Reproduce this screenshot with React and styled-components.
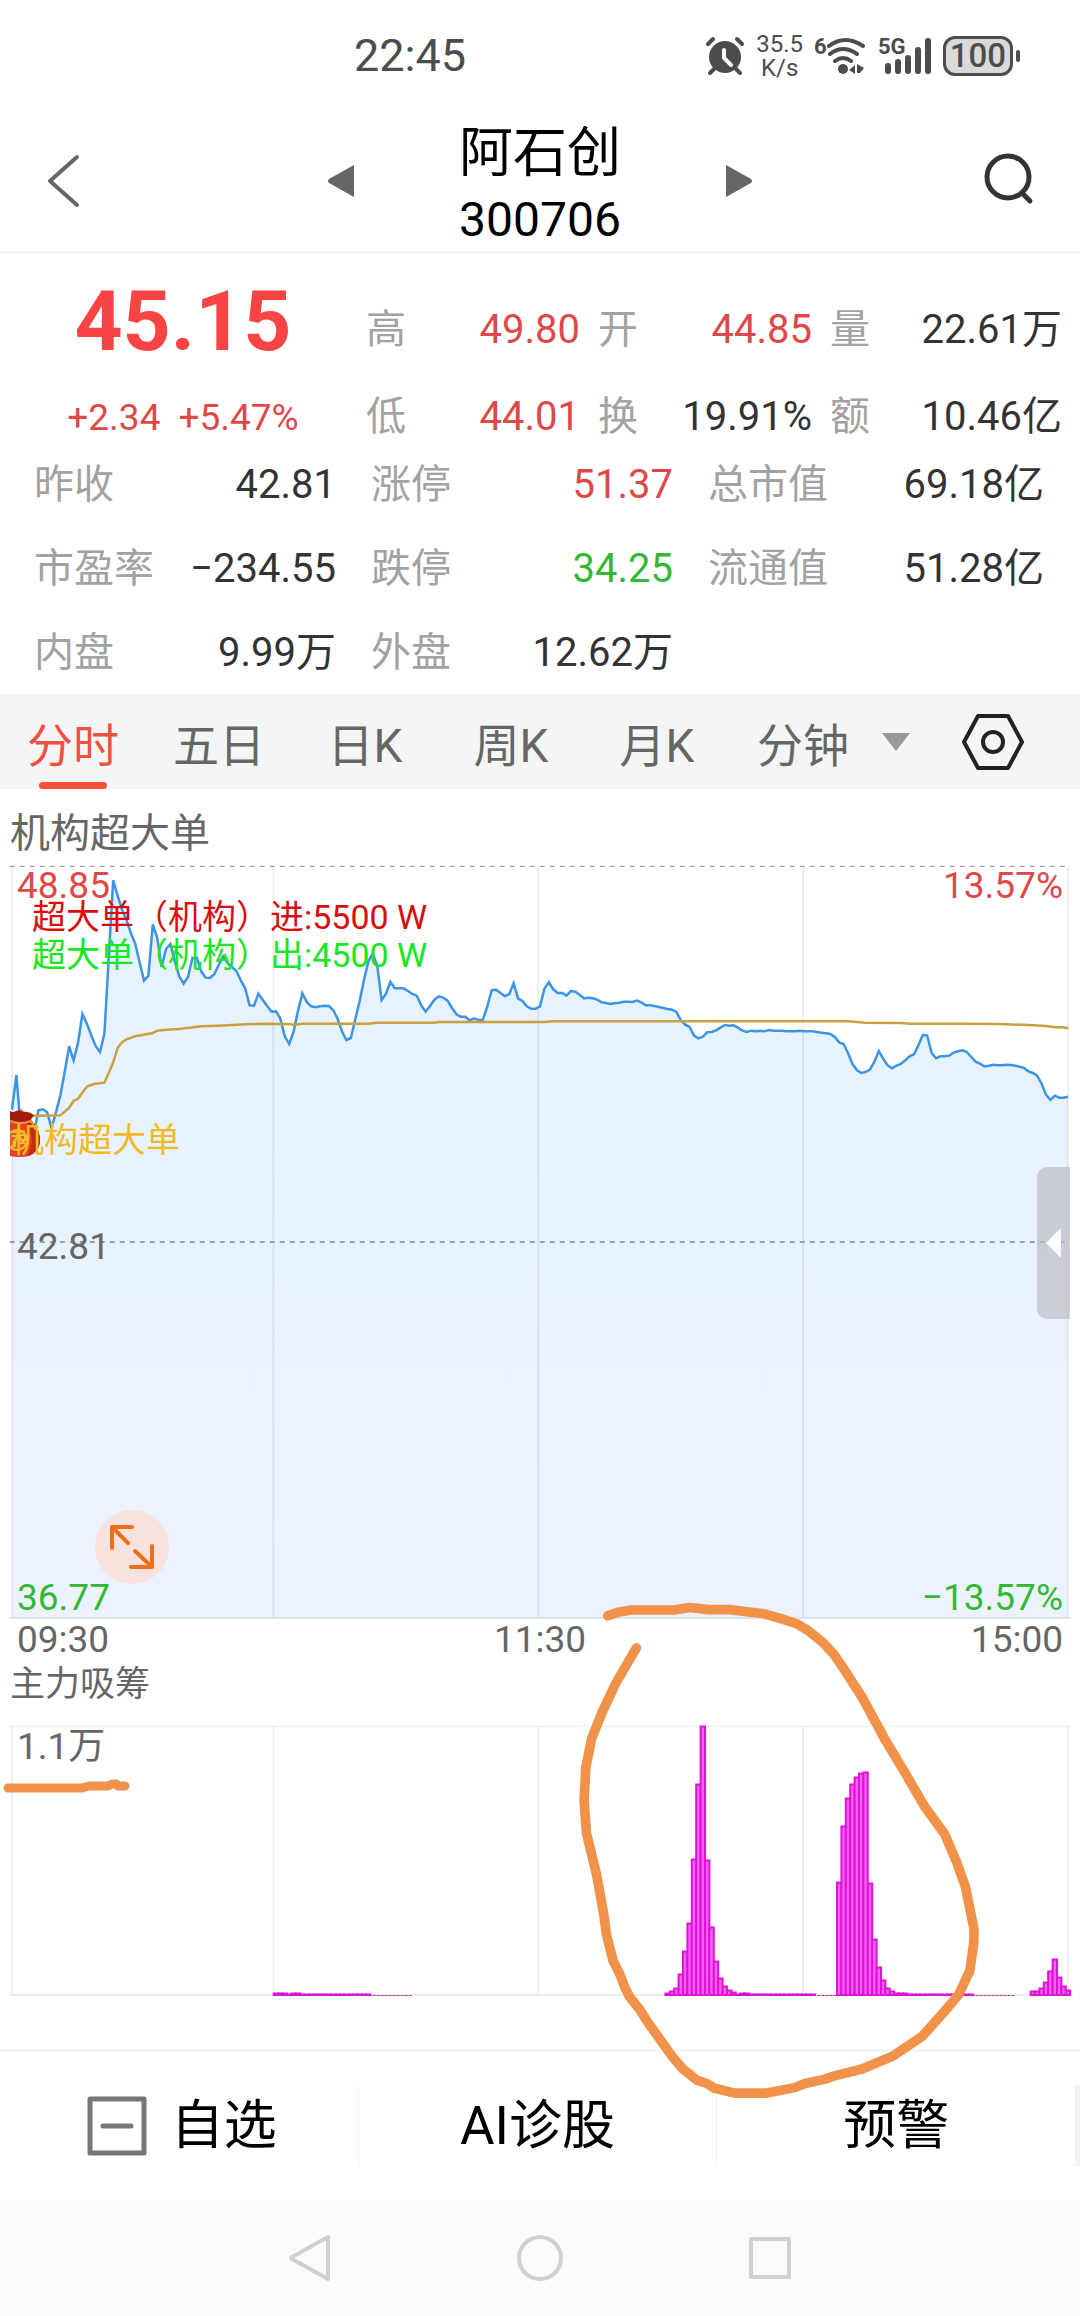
import React from "react";
import styled, { createGlobalStyle } from "styled-components";

const GlobalStyle = createGlobalStyle`
  * { box-sizing: border-box; }
  body {
    margin: 0;
    background: #fff;
    font-family: Roboto, "Noto Sans CJK SC", sans-serif;
  }
  button {
    margin: 0;
    padding: 0;
    border: 0;
    background: none;
    font: inherit;
    color: inherit;
    cursor: pointer;
  }
  svg { display: block; }
`;

const RED = "#e04848";
const GREEN = "#34b834";
const DARK = "#333";

const toneColor = { up: RED, down: GREEN, plain: DARK };

/* ---------- data ---------- */

// Minute prices, measured downwards on a scale that runs from 49 (48.85) to 2305 (36.77).
const SCALE_TOP = 49;
const SCALE_SPAN = 2256;
const MINUTES = 240;

const PRICES = [
  780, 676, 840, 870, 865, 850, 782, 779, 788, 835, 787, 737, 665, 590, 632, 580, 493, 522, 556, 589,
  607, 552, 320, 92, 138, 180, 210, 250, 282, 338, 393, 378, 224, 264, 352, 298, 283, 335, 380, 402,
  382, 325, 324, 365, 384, 385, 373, 345, 320, 340, 352, 364, 392, 416, 467, 468, 432, 451, 469, 486,
  485, 507, 560, 583, 546, 483, 431, 457, 470, 473, 470, 468, 469, 481, 507, 545, 571, 565, 510, 455,
  390, 335, 312, 348, 451, 432, 397, 416, 416, 416, 424, 433, 438, 467, 486, 469, 450, 440, 444, 453,
  475, 494, 501, 501, 512, 506, 511, 510, 472, 422, 420, 430, 439, 434, 401, 446, 454, 470, 477, 477,
  470, 417, 397, 419, 430, 430, 438, 424, 426, 435, 446, 444, 446, 450, 458, 460, 463, 461, 459, 456,
  456, 457, 453, 458, 467, 467, 469, 472, 475, 478, 480, 487, 511, 525, 532, 558, 566, 561, 548, 547,
  542, 534, 526, 528, 527, 534, 543, 547, 543, 545, 543, 545, 541, 543, 543, 543, 545, 545, 545, 543,
  545, 545, 545, 547, 549, 551, 553, 562, 578, 583, 610, 643, 661, 670, 667, 660, 636, 604, 627, 647,
  656, 648, 643, 632, 620, 614, 587, 556, 558, 610, 626, 620, 620, 618, 609, 605, 602, 607, 622, 636,
  642, 650, 648, 645, 647, 647, 645, 646, 648, 651, 655, 665, 670, 678, 702, 735, 751, 738, 744, 744,
  741,
];

const AVERAGE = [
  [2, 780], [3, 795], [4, 799], [11, 797], [13, 774], [14, 754], [15, 747], [16, 729], [17, 711],
  [18, 706], [19, 702], [21, 699], [22, 670], [23, 638], [24, 595], [25, 578], [26, 569], [28, 560],
  [32, 550], [33, 543], [35, 540], [38, 538], [43, 530], [47, 528], [53, 524], [58, 522], [63, 523],
  [64, 525], [66, 522], [81, 522], [83, 519], [96, 519], [97, 517], [121, 517], [123, 515], [190, 515],
  [194, 519], [202, 520], [204, 522], [217, 522], [224, 523], [231, 526], [235, 529], [237, 533],
  [239, 533], [240, 536],
];

// Runs of bars: the first minute, then the height of each minute's bar.
const FLOW = [
  [60, [2, 2, 2, 1, 2, 2, 1, 1, 1, 1, 1, 1, 1, 1, 1, 1, 1, 1, 1, 1, 1, 1]],
  [149, [2, 4, 7, 21, 44, 72, 136, 211, 269, 135, 68, 34, 17, 9, 5, 3]],
  [165, [1, 2, 2, 1, 1, 1, 1, 1, 1, 1, 1, 1, 1, 1, 1, 1, 1, 1]],
  [188, [113, 169, 197, 211, 218, 222, 223, 112, 56, 28, 15, 7, 4, 2, 2, 2]],
  [204, [1, 1, 1, 1, 1, 1, 1, 1, 1, 1, 1, 1, 1, 1, 1]],
  [232, [4, 4, 7, 13, 24, 36, 18, 9, 5]],
];
const FLOW_TAILS = [[82, 91], [183, 188], [219, 228]];

const HEADLINE = [
  [["高", "49.80", "up"], ["开", "44.85", "up"], ["量", "22.61万", "plain"]],
  [["低", "44.01", "up"], ["换", "19.91%", "plain"], ["额", "10.46亿", "plain"]],
];
const DETAILS = [
  ["昨收", "42.81", "plain"], ["涨停", "51.37", "up"], ["总市值", "69.18亿", "plain"],
  ["市盈率", "−234.55", "plain"], ["跌停", "34.25", "down"], ["流通值", "51.28亿", "plain"],
  ["内盘", "9.99万", "plain"], ["外盘", "12.62万", "plain"],
];
const TABS = ["分时", "五日", "日K", "周K", "月K", "分钟"];

/* ---------- status bar ---------- */

const Screen = styled.div`
  display: flex;
  flex-direction: column;
  width: 100%;
  background: #fff;
`;

const StatusBar = styled.div`
  display: flex;
  justify-content: space-between;
  align-items: center;
  height: 112px;
  padding: 0 60px 0 354px;
  color: #4c4c4c;
`;

const Clock = styled.time`
  font-size: 45px;
  line-height: 48px;
`;

const StatusIcons = styled.div`
  display: flex;
  align-items: center;
  gap: 11px;
`;

const NetSpeed = styled.div`
  display: flex;
  flex-direction: column;
  align-items: center;
  font-size: 24px;
  line-height: 24px;
`;

const SmallText = styled.text`
  font-size: 22px;
  font-weight: 700;
  fill: #4c4c4c;
  stroke: none;
`;

const AlarmIcon = () => (
  <svg width="40" height="40" viewBox="0 0 40 40" fill="none" stroke="#4c4c4c" strokeWidth="4" strokeLinecap="round">
    <circle cx="20" cy="21" r="16" fill="#4c4c4c" stroke="none" />
    <path d="M3 8 L8 3 M32 3 L37 8 M9 33 L5 37 M31 33 L35 37" />
    <path d="M19 14 V22 L26 29" stroke="#fff" />
  </svg>
);

const WifiIcon = () => (
  <svg width="53" height="40" viewBox="0 0 53 40" fill="none" stroke="#4c4c4c" strokeWidth="4" strokeLinecap="round">
    <SmallText x="0" y="18">6</SmallText>
    <path d="M15 10 Q31 -2 49 10 M16 18 Q29 8 43 18 M21 25 Q29 19 37 25" />
    <circle cx="29" cy="33" r="5" fill="#4c4c4c" stroke="none" />
    <path d="M35 34 L41 29 V38 Z M43 28 L50 32 L46 37 H43 Z" fill="#4c4c4c" stroke="none" />
  </svg>
);

const SignalIcon = () => (
  <svg width="54" height="40" viewBox="0 0 54 40" fill="none" stroke="#4c4c4c" strokeWidth="6" strokeLinecap="round">
    <SmallText x="0" y="18">5G</SmallText>
    <path d="M10 30 V35 M20 26 V35 M30 22 V35 M40 14 V35 M50 5 V35" />
  </svg>
);

const Battery = styled.div`
  display: flex;
  align-items: center;
  gap: 3px;
`;

const BatteryBody = styled.div`
  display: flex;
  align-items: center;
  justify-content: center;
  width: 70px;
  height: 40px;
  border: 3px solid #4c4c4c;
  border-radius: 12px;
  background: #dadada;
  font-size: 33px;
  font-weight: 500;
  line-height: 34px;
`;

const BatteryTip = styled.div`
  width: 4px;
  height: 12px;
  border-radius: 2px;
  background: #4c4c4c;
`;

/* ---------- title bar ---------- */

const TitleBar = styled.header`
  display: grid;
  grid-template-columns: 1fr 28px 370px 28px 1fr;
  align-items: start;
  border-bottom: 3px solid #f5f5f5;
  padding: 7px 46px 0;
`;

const TitleText = styled.div`
  text-align: center;
  color: #000;
`;

const StockName = styled.h1`
  margin: 0;
  font-size: 54px;
  font-weight: 400;
  line-height: 70px;
`;

const StockCode = styled.div`
  font-size: 48px;
  line-height: 62px;
`;

const IconButton = styled.button`
  display: flex;
  align-items: center;
  justify-content: ${(p) => p.$align || "center"};
`;

const TitleButton = styled(IconButton)`
  height: 124px;
`;

/* ---------- quote ---------- */

const Quote = styled.section`
  display: flex;
  padding: 28px 18px 0 0;
`;

const PriceBlock = styled.div`
  display: flex;
  flex: 0 0 366px;
  flex-direction: column;
  align-items: center;
  gap: 28px;
`;

const Price = styled.div`
  font-size: 84px;
  font-weight: 700;
  line-height: 80px;
  color: #f84444;
`;

const Change = styled.div`
  display: flex;
  gap: 18px;
  font-size: 37px;
  line-height: 56px;
  color: ${RED};
`;

const Headline = styled.dl`
  display: grid;
  flex: 1;
  grid-template-columns: 214px 214px 1fr;
  gap: 29px 18px;
  margin: 0;
  padding-top: 20px;
`;

const Details = styled.dl`
  display: grid;
  grid-template-columns: 302fr 302fr 336fr;
  gap: 28px 35px;
  margin: 0;
  padding: 11px 36px 13px 34px;
`;

const Field = styled.div`
  display: flex;
  justify-content: space-between;
  font-size: 40px;
  line-height: 56px;
`;

const FieldName = styled.dt`
  color: #a2a2a2;
`;

const FieldValue = styled.dd`
  margin: 0;
  color: ${(p) => toneColor[p.$tone]};
`;

/* ---------- tabs ---------- */

const TabBar = styled.nav`
  display: flex;
  align-items: stretch;
  height: 95px;
  background: #f4f6f5;
`;

const Tab = styled.button`
  display: flex;
  flex: 1;
  flex-direction: column;
  align-items: center;
  justify-content: space-between;
  padding-top: 22px;
  font-size: 46px;
  line-height: 60px;
  color: ${(p) => (p.$active ? "#f0503f" : "#666")};

  &::after {
    content: "";
    width: 68px;
    height: 7px;
    border-radius: 4px;
    background: ${(p) => (p.$active ? "#f9503d" : "transparent")};
  }
`;

const TabTools = styled.div`
  display: flex;
  flex: 0 0 204px;
  align-items: center;
  gap: 52px;
  padding-left: 6px;
`;

/* ---------- charts ---------- */

const ChartTitle = styled.h2`
  margin: 0 -2px;
  font-size: ${(p) => p.$size}px;
  font-weight: 400;
  line-height: 48px;
  color: #666;
`;

const ChartSection = styled.section`
  padding: ${(p) => p.$top}px 12px 0;
`;

const Plot = styled.div`
  position: relative;
  height: ${(p) => p.$height}px;
  margin-top: ${(p) => p.$gap}px;
`;

const Canvas = styled.svg`
  width: 100%;
  height: 100%;
  overflow: visible;

  line, path, rect, polyline { vector-effect: non-scaling-stroke; }
`;

const AxisLabel = styled.span`
  position: absolute;
  ${(p) => (p.$right ? "right: 5px;" : "left: 5px;")}
  top: ${(p) => p.$top};
  font-size: 37px;
  line-height: 40px;
  color: ${(p) => p.$color};
`;

const Legend = styled.div`
  position: absolute;
  left: 20px;
  top: 32px;
  font-size: 34px;
  line-height: 38px;
  white-space: pre;
`;

const LegendLine = styled.div`
  color: ${(p) => p.$color};
`;

const Marker = styled.div`
  position: absolute;
  left: -2px;
  top: 243px;
  font-size: 34px;
  line-height: 62px;
  color: #f2b922;
`;

const MarkerIcon = styled.svg`
  position: absolute;
  left: 0;
  top: 0;
`;

const MarkerText = styled.span`
  position: relative;
`;

const ExpandButton = styled.button`
  position: absolute;
  left: 83px;
  bottom: 34px;
  display: flex;
  align-items: center;
  justify-content: center;
  width: 74px;
  height: 74px;
  border-radius: 50%;
  background: #f8e2de;
`;

const SideHandle = styled.button`
  position: absolute;
  right: -2px;
  top: 40%;
  display: flex;
  align-items: center;
  justify-content: center;
  width: 33px;
  height: 152px;
  border-radius: 10px 0 0 10px;
  background: rgba(190, 190, 198, 0.7);
`;

const TimeAxis = styled.div`
  display: flex;
  justify-content: space-between;
  padding: 2px 5px 0;
  font-size: 37px;
  line-height: 40px;
  color: #666;
`;

const FlowSection = styled(ChartSection)`
  position: relative;
  padding-bottom: 53px;
`;

const PenCircle = styled.svg`
  position: absolute;
  left: 50%;
  top: -80px;
  width: 50%;
  height: 540px;
  pointer-events: none;
`;

const PenUnderline = styled.svg`
  position: absolute;
  left: 0;
  top: 118px;
  width: 134px;
  height: 20px;
  pointer-events: none;
`;

const GRID_MINUTES = [0, 59.4, 119.6, 179.8, 240];

function Grid({ top, span }) {
  return GRID_MINUTES.map((m) => (
    <line key={m} x1={m} x2={m} y1={top} y2={top + span} stroke="rgba(0,0,0,0.07)" strokeWidth="2" />
  ));
}

function PriceChart() {
  const line = PRICES.map((v, i) => `${i},${v}`).join(" ");
  const bottom = SCALE_TOP + SCALE_SPAN;
  const middle = SCALE_TOP + SCALE_SPAN / 2;
  return (
    <Canvas viewBox={`0 ${SCALE_TOP} ${MINUTES} ${SCALE_SPAN}`} preserveAspectRatio="none" aria-label="分时走势">
      <defs>
        <linearGradient id="area" x1="0" y1="0" x2="0" y2="1">
          <stop offset="0" stopColor="#e5f2ff" />
          <stop offset="1" stopColor="#ecf3fe" />
        </linearGradient>
      </defs>
      <polyline points={`0,${bottom} ${line} ${MINUTES},${bottom}`} fill="url(#area)" />
      <Grid top={SCALE_TOP} span={SCALE_SPAN} />
      <line x1="-0.5" x2="240.5" y1={bottom} y2={bottom} stroke="#dde3ee" strokeWidth="2" />
      <line x1="-0.5" x2="240" y1={SCALE_TOP + 1} y2={SCALE_TOP + 1} stroke="#8c8c8c" strokeWidth="1" strokeDasharray="5 5" />
      <line x1="-0.5" x2="240" y1={middle} y2={middle} stroke="#98a0aa" strokeWidth="2" strokeDasharray="5 5" />
      <polyline points={line} fill="none" stroke="#3e94e4" strokeWidth="2.5" />
      <polyline points={AVERAGE.map((p) => p.join(",")).join(" ")} fill="none" stroke="#c8a040" strokeWidth="2.5" />
    </Canvas>
  );
}

function FlowChart() {
  return (
    <Canvas viewBox={`0 0 ${MINUTES} 270`} preserveAspectRatio="none" aria-label="主力吸筹">
      <Grid top={0} span={270} />
      <line x1="-0.5" x2="240.5" y1="0.5" y2="0.5" stroke="#ebebeb" strokeWidth="1" />
      <line x1="-0.5" x2="240.5" y1="269" y2="269" stroke="#ebebeb" strokeWidth="2" />
      {FLOW.map(([start, heights]) =>
        heights.map((h, i) => (
          <rect
            key={start + i}
            x={start + i - 0.5}
            y={269.5 - h}
            width="1"
            height={h - 0.5}
            fill="#ff5ef8"
            stroke="#dc14d6"
            strokeWidth="2"
          />
        ))
      )}
      {FLOW_TAILS.map(([from, to]) => (
        <line key={from} x1={from} x2={to} y1="269.5" y2="269.5" stroke="#a8409f" strokeWidth="1" strokeDasharray="3 1" />
      ))}
    </Canvas>
  );
}

const MoneyBag = () => (
  <MarkerIcon width="32" height="50" viewBox="0 0 32 50">
    <path d="M0 11 H21 Q31 21 30 34 Q28 44 19 47 Q9 49 0 47 Z" fill="#e2401f" />
    <path d="M21 11 Q31 21 30 34 Q28 44 17 47 Q27 32 16 13 Z" fill="#c32a12" />
    <path d="M0 2 Q3 4 6 2 Q10 0 13 3 Q18 2 24 6 Q21 10 20 13 Q9 15 0 12 Z" fill="#a81a10" />
    <path d="M0 12 Q11 16 21 12 Q25 18 25 21" fill="none" stroke="#f0914a" strokeWidth="2" />
    <circle cx="7" cy="31" r="10" fill="#e25a28" stroke="#f5b83e" strokeWidth="2" />
    <path d="M2 27 H8 L3 34 M5 30 V38 M10 26 H15 V31 H10 Z M10 34 H15" fill="none" stroke="#f5b83e" strokeWidth="2" />
  </MarkerIcon>
);

/* ---------- bottom bars ---------- */

const ActionBar = styled.footer`
  display: grid;
  grid-template-columns: repeat(3, 1fr) 4px;
  border-top: 3px solid #f4f6f6;
  padding: 33px 0;
`;

const Action = styled.button`
  display: flex;
  align-items: center;
  justify-content: center;
  gap: 24px;
  height: 82px;
  border-right: 1px solid #f2f2f2;
  font-size: 53px;
  line-height: 70px;
  color: #000;
`;

const WatchAction = styled(Action)`
  padding-left: 6px;
`;

const ActionEdge = styled.div`
  background: #f2f4f4;
`;

const SystemNav = styled.nav`
  display: flex;
  justify-content: center;
  height: 116px;
  background: #fbfbfb;
`;

const NavButton = styled(IconButton)`
  width: 230px;
`;

function FieldItem({ name, value, tone }) {
  return (
    <Field>
      <FieldName>{name}</FieldName>
      <FieldValue $tone={tone}>{value}</FieldValue>
    </Field>
  );
}

export default function App() {
  return (
    <>
      <GlobalStyle />
      <Screen>
        <StatusBar>
          <Clock>22:45</Clock>
          <StatusIcons>
            <AlarmIcon />
            <NetSpeed>
              <span>35.5</span>
              <span>K/s</span>
            </NetSpeed>
            <WifiIcon />
            <SignalIcon />
            <Battery>
              <BatteryBody>100</BatteryBody>
              <BatteryTip />
            </Battery>
          </StatusIcons>
        </StatusBar>

        <TitleBar>
          <TitleButton $align="flex-start" aria-label="返回">
            <svg width="36" height="56" viewBox="0 0 36 56" fill="none" stroke="#666" strokeWidth="4" strokeLinecap="round" strokeLinejoin="round">
              <path d="M31 4 L4 28 L31 52" />
            </svg>
          </TitleButton>
          <TitleButton aria-label="上一只">
            <svg width="28" height="32" viewBox="0 0 28 32" fill="#666">
              <path d="M27 0 V32 L2 18 Q0 16 2 14 Z" />
            </svg>
          </TitleButton>
          <TitleText>
            <StockName>阿石创</StockName>
            <StockCode>300706</StockCode>
          </TitleText>
          <TitleButton aria-label="下一只">
            <svg width="28" height="32" viewBox="0 0 28 32" fill="#666">
              <path d="M1 0 V32 L26 18 Q28 16 26 14 Z" />
            </svg>
          </TitleButton>
          <TitleButton $align="flex-end" aria-label="搜索">
            <svg width="50" height="56" viewBox="0 0 50 56" fill="none" stroke="#333" strokeWidth="5" strokeLinecap="round">
              <circle cx="24" cy="24" r="21" />
              <path d="M38 40 L46 48" />
            </svg>
          </TitleButton>
        </TitleBar>

        <Quote>
          <PriceBlock>
            <Price>45.15</Price>
            <Change>
              <span>+2.34</span>
              <span>+5.47%</span>
            </Change>
          </PriceBlock>
          <Headline>
            {HEADLINE.flat().map(([name, value, tone]) => (
              <FieldItem key={name} name={name} value={value} tone={tone} />
            ))}
          </Headline>
        </Quote>
        <Details>
          {DETAILS.map(([name, value, tone]) => (
            <FieldItem key={name} name={name} value={value} tone={tone} />
          ))}
        </Details>

        <TabBar>
          {TABS.map((label, i) => (
            <Tab key={label} $active={i === 0}>
              {label}
            </Tab>
          ))}
          <TabTools>
            <IconButton aria-label="更多周期">
              <svg width="28" height="18" viewBox="0 0 28 18" fill="#999">
                <path d="M0 0 H28 L14 18 Z" />
              </svg>
            </IconButton>
            <IconButton aria-label="设置">
              <svg width="62" height="58" viewBox="0 0 62 58" fill="none" stroke="#222" strokeWidth="4" strokeLinejoin="round">
                <path d="M16 3 H46 L60 29 L46 55 H16 L2 29 Z" />
                <circle cx="31" cy="29" r="10" />
              </svg>
            </IconButton>
          </TabTools>
        </TabBar>

        <ChartSection $top={21}>
          <ChartTitle $size={40}>机构超大单</ChartTitle>
          <Plot $height={752} $gap={8}>
            <PriceChart />
            <AxisLabel $top="0" $color={RED}>48.85</AxisLabel>
            <AxisLabel $top="0" $right $color={RED}>13.57%</AxisLabel>
            <AxisLabel $top="calc(50% - 15px)" $color="#666">42.81</AxisLabel>
            <AxisLabel $top="calc(100% - 40px)" $color={GREEN}>36.77</AxisLabel>
            <AxisLabel $top="calc(100% - 40px)" $right $color={GREEN}>−13.57%</AxisLabel>
            <Legend>
              <LegendLine $color="#d90d0d">超大单（机构）进:5500 W</LegendLine>
              <LegendLine $color="#16e81c">超大单（机构）出:4500 W</LegendLine>
            </Legend>
            <Marker>
              <MoneyBag />
              <MarkerText>机构超大单</MarkerText>
            </Marker>
            <ExpandButton aria-label="全屏">
              <svg width="46" height="46" viewBox="0 0 46 46" fill="none" stroke="#ee6f1a" strokeWidth="4" strokeLinecap="round" strokeLinejoin="round">
                <path d="M23 3 H3 V24 M3 3 L19 19 M26 27 L43 43 M43 22 V43 H22" />
              </svg>
            </ExpandButton>
            <SideHandle aria-label="展开盘口">
              <svg width="15" height="30" viewBox="0 0 15 30" fill="#fafcff">
                <path d="M15 0 V30 L0 15 Z" />
              </svg>
            </SideHandle>
          </Plot>
          <TimeAxis>
            <span>09:30</span>
            <span>11:30</span>
            <span>15:00</span>
          </TimeAxis>
        </ChartSection>

        <FlowSection $top={1}>
          <ChartTitle $size={35}>主力吸筹</ChartTitle>
          <Plot $height={270} $gap={17}>
            <FlowChart />
            <AxisLabel $top="1px" $color="#666">1.1万</AxisLabel>
          </Plot>
          <PenCircle viewBox="0 0 1568 1568" preserveAspectRatio="none" fill="none" stroke="#f0924a" strokeWidth="28" strokeLinecap="round" strokeLinejoin="round">
            <path d="M197 104 L225 94 L265 87 H390 L435 80 L490 86 H550 L650 98 L700 112 L745 127 L780 148 L820 180 L855 218 L880 255 L935 340 L1000 460 L1060 560 L1115 655 L1175 738 L1210 820 L1235 890 L1260 1012 V1050 L1248 1135 L1215 1205 L1175 1252 L1110 1325 L1025 1382 L935 1420 L855 1440 L825 1450 L770 1462 L740 1474 L655 1490 H565 L505 1475 L485 1462 L455 1452 L415 1420 L385 1385 L310 1280 L290 1248 L260 1210 L245 1180 L232 1145 L212 1105 L193 1030 L185 970 L165 860 L135 735 L128 640 L133 545 L150 460 L180 385 L220 300 L280 197" />
          </PenCircle>
          <PenUnderline viewBox="0 0 134 20" fill="none" stroke="#f0924a" strokeWidth="9" strokeLinecap="round" strokeLinejoin="round">
            <path d="M8 10 H82 L89 8 H108 L112 6 H116 L118 8 H125" />
          </PenUnderline>
        </FlowSection>

        <ActionBar>
          <WatchAction>
            <svg width="60" height="60" viewBox="0 0 60 60" fill="none" stroke="#777" strokeWidth="5" strokeLinejoin="round">
              <rect x="3" y="3" width="54" height="54" />
              <path d="M16 30 H44" strokeLinecap="round" />
            </svg>
            自选
          </WatchAction>
          <Action>AI诊股</Action>
          <Action>预警</Action>
          <ActionEdge />
        </ActionBar>

        <SystemNav>
          <NavButton aria-label="返回键">
            <svg width="44" height="48" viewBox="0 0 44 48" fill="none" stroke="#d0d0d0" strokeWidth="4" strokeLinejoin="round">
              <path d="M40 3 V45 L4 25 Q2 24 4 23 Z" />
            </svg>
          </NavButton>
          <NavButton aria-label="主页键">
            <svg width="48" height="48" viewBox="0 0 48 48" fill="none" stroke="#d0d0d0" strokeWidth="4">
              <circle cx="24" cy="24" r="21" />
            </svg>
          </NavButton>
          <NavButton aria-label="多任务键">
            <svg width="44" height="44" viewBox="0 0 44 44" fill="none" stroke="#d0d0d0" strokeWidth="4" strokeLinejoin="round">
              <rect x="3" y="3" width="38" height="38" />
            </svg>
          </NavButton>
        </SystemNav>
      </Screen>
    </>
  );
}
